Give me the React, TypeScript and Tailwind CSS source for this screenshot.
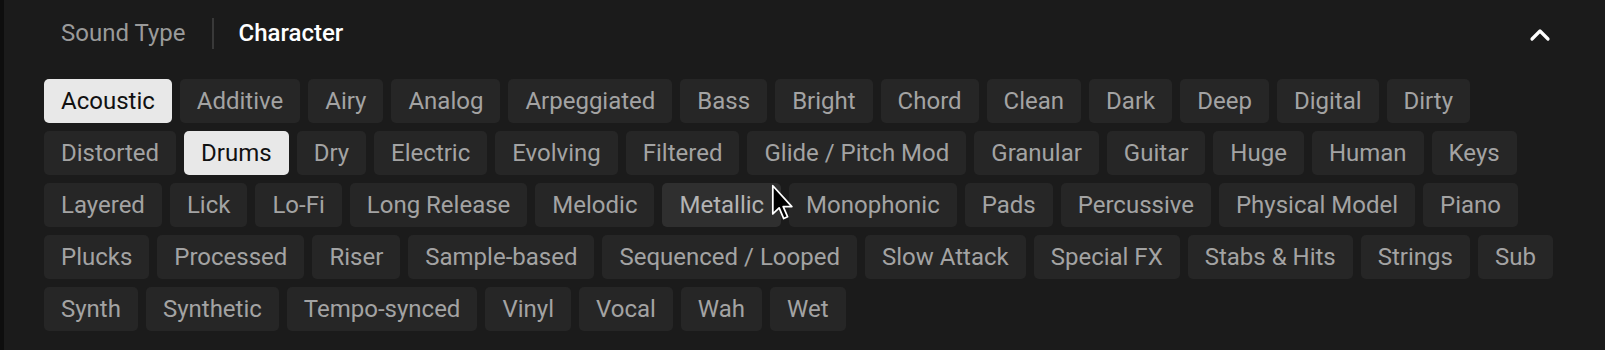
import { ChevronUp } from "lucide-react"

const tags = [
  "Acoustic", "Additive", "Airy", "Analog", "Arpeggiated", "Bass", "Bright", "Chord", "Clean", "Dark", "Deep", "Digital", "Dirty",
  "Distorted", "Drums", "Dry", "Electric", "Evolving", "Filtered", "Glide / Pitch Mod", "Granular", "Guitar", "Huge", "Human", "Keys",
  "Layered", "Lick", "Lo-Fi", "Long Release", "Melodic", "Metallic", "Monophonic", "Pads", "Percussive", "Physical Model", "Piano",
  "Plucks", "Processed", "Riser", "Sample-based", "Sequenced / Looped", "Slow Attack", "Special FX", "Stabs & Hits", "Strings", "Sub",
  "Synth", "Synthetic", "Tempo-synced", "Vinyl", "Vocal", "Wah", "Wet",
]

const selected = ["Acoustic", "Drums"]
const hovered = "Metallic"

function Cursor() {
  return (
    <svg
      className="pointer-events-none absolute left-[767px] top-[184px]"
      width="23"
      height="37"
      viewBox="0 0 13 21"
    >
      <path
        d="M1 1 L1 17 L4.6 13.6 L7.2 19.6 L9.4 18.6 L6.9 12.8 L11.8 12.8 Z"
        fill="#000"
        stroke="#fff"
        strokeWidth="1"
        strokeLinejoin="round"
      />
    </svg>
  )
}

export default function App() {
  return (
    <div
      className="relative min-h-[350px] border-l-4 border-[#0e0e0e] bg-[#1b1b1b] pl-10 pr-10 pb-5"
      style={{ fontFamily: "Roboto, 'Liberation Sans', sans-serif" }}
    >
      {/* Tabs */}
      <div className="flex h-16 items-center pt-[2px]">
        <div className="flex items-center pl-[17px]">
          <span className="text-[24px] leading-7 text-[#9a9a9a]">Sound Type</span>
          <div className="ml-[27px] mr-[24px] h-[31px] w-[2px] bg-[#393939]" />
          <span className="text-[24px] font-medium leading-7 text-white">Character</span>
        </div>
        <button className="ml-auto mr-[9px] mt-[4px] text-white">
          <ChevronUp className="h-8 w-8" strokeWidth={2.4} />
        </button>
      </div>

      {/* Tags */}
      <div className="mt-[15px] flex flex-wrap gap-2">
        {tags.map((tag) => {
          const isSelected = selected.includes(tag)
          const isHovered = tag === hovered
          return (
            <span
              key={tag}
              className={
                isSelected
                  ? "flex h-11 items-center rounded-[5px] bg-[#e8e8e8] px-[17px] text-[24px] text-[#111]"
                  : isHovered
                  ? "flex h-11 items-center rounded-[5px] bg-[#2f2f2f] px-[17px] text-[24px] text-[#b4b4b4]"
                  : "flex h-11 items-center rounded-[5px] bg-[#262626] px-[17px] text-[24px] text-[#a3a3a3]"
              }
            >
              {tag}
            </span>
          )
        })}
      </div>

      <Cursor />
    </div>
  )
}
